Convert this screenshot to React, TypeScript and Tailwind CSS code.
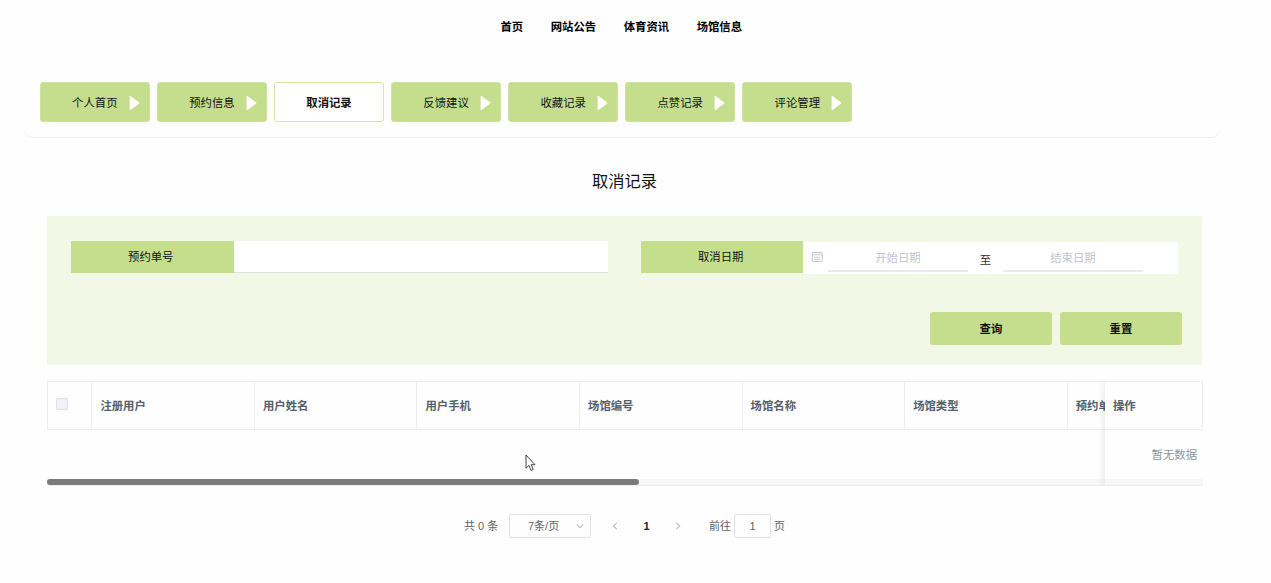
import React from 'react';

const navItems = ['首页', '网站公告', '体育资讯', '场馆信息'];
const tabs = ['个人首页', '预约信息', '取消记录', '反馈建议', '收藏记录', '点赞记录', '评论管理'];
const columns = ['注册用户', '用户姓名', '用户手机', '场馆编号', '场馆名称', '场馆类型'];
const activeTab = '取消记录';

function PlayIcon() {
  return (
    <svg className="absolute top-[12px] right-[9px]" width="11" height="16" viewBox="0 0 11 16">
      <path d="M1.2 1.6 9.8 8 1.2 14.4Z" fill="#fff" stroke="#fff" strokeWidth="1.2" strokeLinejoin="round" />
    </svg>
  );
}

function CalendarIcon() {
  return (
    <svg width="12" height="12" viewBox="0 0 12 12" fill="none" stroke="#c0c4cc" strokeWidth="0.9">
      <rect x="1.3" y="1.5" width="9.9" height="9" rx="0.4" />
      <path d="M1.3 3.8h9.9M3.3 6.3h6M3.3 8.4h6M3.7.6v1.7M8.8.6v1.7" />
    </svg>
  );
}

function Chevron({ d }: { d: string }) {
  return (
    <svg width="8" height="8" viewBox="0 0 8 8" fill="none" stroke="#b9bdc6" strokeWidth="1.1">
      <path d={d} />
    </svg>
  );
}

function Header() {
  return (
    <nav className="flex h-[54px] items-center gap-[27.5px] pl-[500.5px] font-bold text-black">
      {navItems.map((item) => (
        <a key={item}>{item}</a>
      ))}
    </nav>
  );
}

function Tabs() {
  return (
    <div className="mx-[25px] flex h-[84px] w-[1194px] gap-[7.4px] rounded-b-[8px] border-b border-[#eee] pt-[28px] pl-[15px]">
      {tabs.map((tab) =>
        tab === activeTab ? (
          <div key={tab} className="flex h-[40.4px] w-[109.7px] items-center justify-center rounded-[3px] border border-[#d5e6ac] bg-white pt-[1px] font-bold">
            {tab}
          </div>
        ) : (
          <div key={tab} className="relative flex h-[40.4px] w-[109.7px] items-center justify-center rounded-[3px] border border-[#cde39f] bg-[#c4de8e] pt-[1px]">
            {tab}
            <PlayIcon />
          </div>
        ),
      )}
    </div>
  );
}

function SearchPanel() {
  return (
    <section className="ml-[47px] h-[148.6px] w-[1155.4px] bg-[#f2f7e6] pt-[24.6px] pl-[24px]">
      <div className="flex gap-[32.5px]">
        <div className="flex h-[32.4px] w-[537.4px]">
          <div className="flex w-[162.5px] items-center justify-center bg-[#c4de8e] pr-[3px]">预约单号</div>
          <div className="flex-1 border-b border-[#dcdfe6] bg-white bg-clip-padding" />
        </div>
        <div className="flex h-[32.4px] w-[537.4px]">
          <div className="flex w-[162.5px] items-center justify-center bg-[#c4de8e] pr-[3px]">取消日期</div>
          <div className="mt-[0.6px] flex h-[32.4px] flex-1 bg-white pl-[8px]">
            <div className="w-[16.5px] pt-[9px]">
              <CalendarIcon />
            </div>
            <div className="flex h-[30px] w-[140px] items-center justify-center border-b-2 border-[#e9eaf2] pt-[4px] text-[#c0c4cc]">开始日期</div>
            <div className="flex w-[35px] items-center justify-center pt-[5px] text-[#303133]">至</div>
            <div className="flex h-[30px] w-[140px] items-center justify-center border-b-2 border-[#e9eaf2] pt-[4px] text-[#c0c4cc]">结束日期</div>
          </div>
        </div>
      </div>
      <div className="mt-[39px] flex justify-end gap-[8px] pr-[20.5px]">
        {['查询', '重置'].map((label) => (
          <button key={label} className="h-[32.5px] w-[122px] rounded-[3px] bg-[#c4de8e] font-bold">
            {label}
          </button>
        ))}
      </div>
    </section>
  );
}

function RecordTable() {
  return (
    <section className="mt-[16px] ml-[47px] flex h-[105px] w-[1156px] overflow-hidden">
      <div className="w-[1058px] shrink-0">
        <div className="flex h-[49px] w-full border-y border-l border-[#ebeef5] font-bold text-[#54606a]">
          <div className="w-[44.4px] shrink-0 border-r border-[#ebeef5] pt-[16px] pl-[8px]">
            <div className="h-[12px] w-[11.5px] rounded-[2px] border border-[#dcdfe6] bg-[#f1f1fb]" />
          </div>
          {columns.map((column) => (
            <div key={column} className="flex w-[162.55px] shrink-0 items-center border-r border-[#ebeef5] pt-[2px] pl-[8px]">
              {column}
            </div>
          ))}
          <div className="flex min-w-0 flex-1 items-center overflow-hidden pt-[2px] pl-[8px] whitespace-nowrap">
            预约单
          </div>
        </div>
        <div className="mt-[49px] h-[7px] border-b border-[#ebeef5] bg-[#f7f7f7]">
          <div className="h-[6px] w-[592.4px] rounded-full bg-[#7b7b7b]" />
        </div>
      </div>
      <div className="relative w-[98px] shrink-0 shadow-[0_0_8px_rgba(0,0,0,0.12)]">
        <div className="flex h-[49px] items-center border-y border-r border-[#ebeef5] pt-[2px] pl-[8px] font-bold text-[#54606a]">操作</div>
        <div className="flex h-[49px] items-center justify-end pt-[2px] pr-[6px] text-[#909399]">暂无数据</div>
        <div className="h-[7px] border-b border-[#ebeef5] bg-[#f7f7f7]" />
      </div>
    </section>
  );
}

function Pagination() {
  return (
    <footer className="mt-[28px] flex h-[24px] items-center pl-[464px] text-[11px] text-[#606266]">
      <span className="w-[45px] whitespace-pre">共 0 条</span>
      <div className="flex h-[24px] w-[82px] items-center justify-between rounded-[2px] border border-[#dfe2ea] pr-[6px] pl-[18px]">
        <span>7条/页</span>
        <Chevron d="M.8 2.5 4 5.7 7.2 2.5" />
      </div>
      <div className="ml-[20px]">
        <Chevron d="M5.8.8 2.4 4l3.4 3.2" />
      </div>
      <span className="ml-[24px] w-[7px] text-center font-bold text-[#222]">1</span>
      <div className="ml-[24px]">
        <Chevron d="M2.4.8 5.8 4 2.4 7.2" />
      </div>
      <span className="ml-[27px]">前往</span>
      <div className="ml-[3px] flex h-[24px] w-[37px] items-center justify-center rounded-[2px] border border-[#dfe2ea]">1</div>
      <span className="ml-[3px]">页</span>
    </footer>
  );
}

export default function App() {
  return (
    <main className="relative h-[583px] w-[1271px] overflow-hidden bg-[#fefefe] font-['Liberation_Sans','Noto_Sans_CJK_SC',sans-serif] text-[11.375px] leading-[16px] text-[#111]">
      <Header />
      <Tabs />
      <h1 className="flex h-[78.4px] items-center pt-[7px] pl-[592px] text-[16.25px] leading-[24px]">取消记录</h1>
      <SearchPanel />
      <RecordTable />
      <Pagination />
      <svg className="absolute top-[454px] left-[525px]" width="12" height="19" viewBox="0 0 12 19">
        <path d="M1 1v13.2l3-2.8 2 5 2.2-.9-2-4.8H10Z" fill="#fff" stroke="#333" strokeWidth="0.9" />
      </svg>
    </main>
  );
}
